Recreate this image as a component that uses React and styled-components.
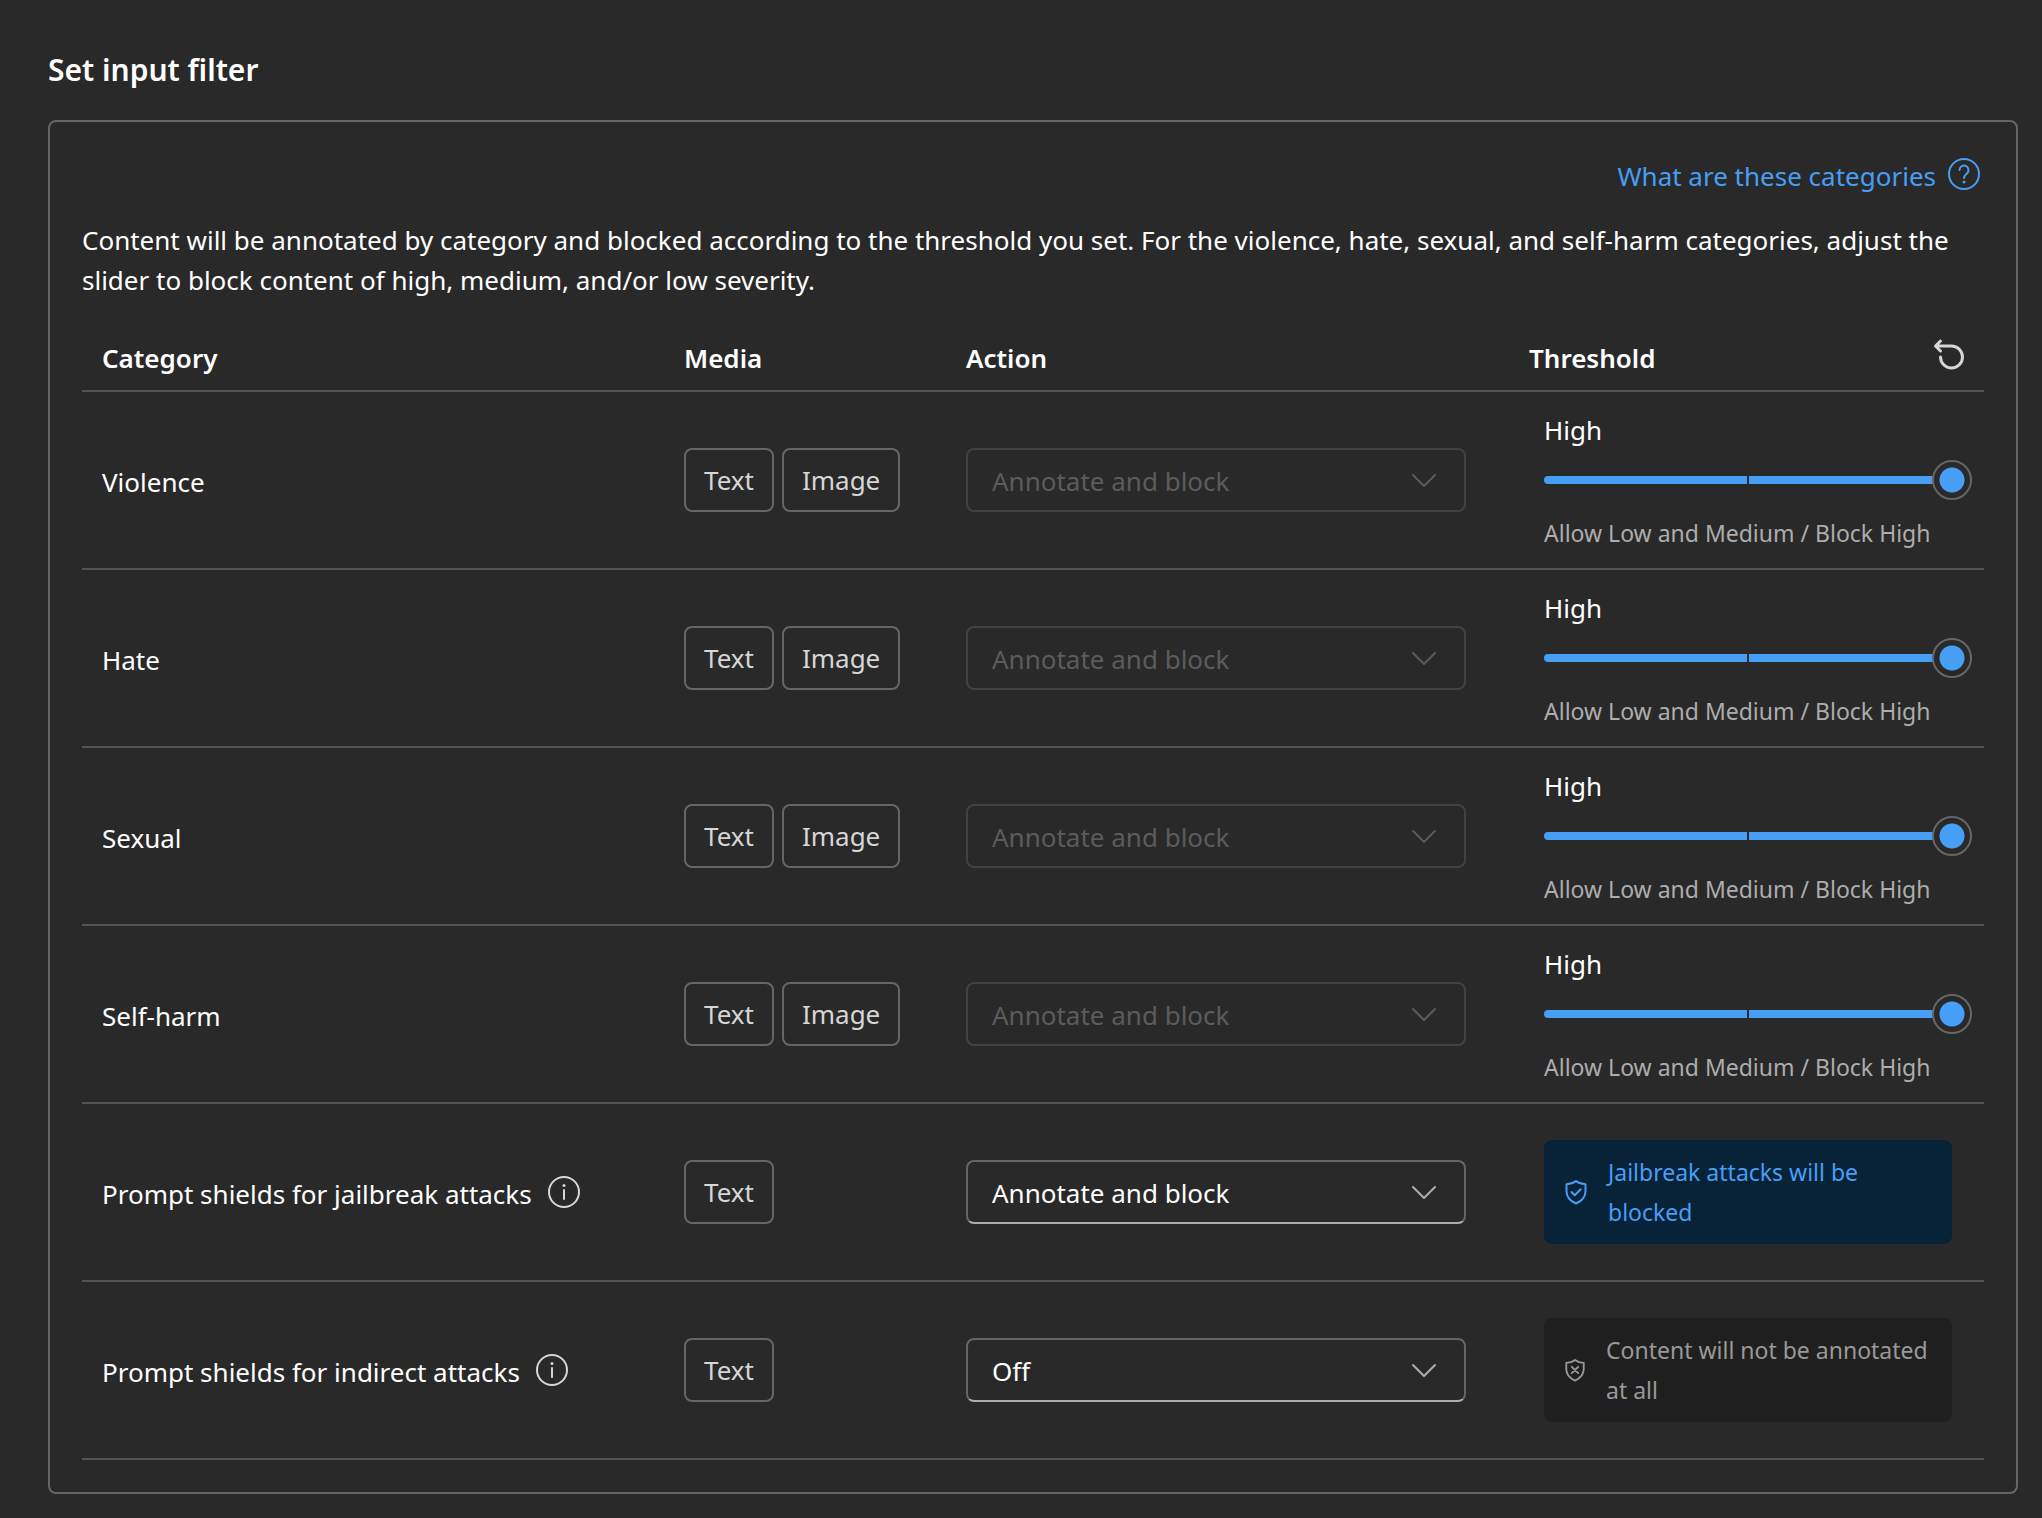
import { useState } from 'react';
import styled, { createGlobalStyle } from 'styled-components';

const GlobalStyle = createGlobalStyle`
	*, *::before, *::after {
		box-sizing: border-box;
	}

	body {
		margin: 0;
		background: #292929;
		color: #ffffff;
		font-family: 'Segoe UI', 'Noto Sans', sans-serif;
		font-size: 26px;
		line-height: 40px;
	}
`;

const Page = styled.main`
	padding: 48px 24px 24px 48px;
`;

const Title = styled.h1`
	margin: 0 0 28px;
	font-size: 30px;
	font-weight: 600;
	line-height: 44px;
`;

const Panel = styled.section`
	padding: 32px;
	border: 2px solid #666666;
	border-radius: 8px;
`;

const PanelTop = styled.div`
	display: flex;
	justify-content: flex-end;
	padding-right: 4px;
`;

const HelpLink = styled.a`
	display: flex;
	align-items: center;
	gap: 12px;
	height: 40px;
	color: #479ef5;
	text-decoration: none;
`;

const Intro = styled.p`
	margin: 26px 0 28px;
`;

const Table = styled.table`
	width: 100%;
	table-layout: fixed;
	border-collapse: separate;
	border-spacing: 0;
`;

const HeadCell = styled.th`
	width: ${({ $width }) => $width || 'auto'};
	height: 64px;
	padding: 0 20px 2px;
	border-bottom: 2px solid #525252;
	font-weight: 600;
	text-align: left;
`;

const HeadSplit = styled.div`
	display: flex;
	align-items: flex-start;
	justify-content: space-between;
`;

const Cell = styled.td`
	height: 178px;
	padding: 0 20px;
	border-bottom: 2px solid #525252;
`;

const ThresholdCell = styled(Cell)`
	padding: 0 32px 0 35px;
`;

const IconButton = styled.button`
	display: flex;
	padding: 0;
	border: 0;
	background: none;
	color: #d6d6d6;
	cursor: pointer;
`;

const Category = styled.div`
	display: flex;
	align-items: center;
	gap: 16px;
`;

/* the label sits a touch lower than the icon beside it */
const IconLabel = styled.span`
	padding-top: 3px;
`;

const Tags = styled.div`
	display: flex;
	gap: 8px;
`;

const Tag = styled.span`
	padding: 10px 18px;
	border: 2px solid #666666;
	border-radius: 8px;
	color: #d6d6d6;
`;

const SelectWrap = styled.div`
	position: relative;
	max-width: 500px;
	color: #adadad;

	svg {
		position: absolute;
		top: 16px;
		right: 26px;
		pointer-events: none;
	}
`;

const Select = styled.select`
	display: block;
	width: 100%;
	height: 64px;
	padding: 2px 72px 0 24px;
	border: 2px solid #666666;
	border-bottom-color: #adadad;
	border-radius: 8px;
	appearance: none;
	background: #292929;
	color: #ffffff;
	font: inherit;
	opacity: 1;

	&:disabled {
		border-color: #424242;
		color: #5c5c5c;
	}

	&:disabled + svg {
		color: #5c5c5c;
	}
`;

const SliderLabel = styled.label`
	display: block;
	padding-top: 3px;
`;

const Slider = styled.input`
	display: block;
	width: calc(100% + 20px);
	height: 40px;
	margin: 10px 0 13px;
	appearance: none;
	background: none;

	&::-webkit-slider-runnable-track {
		height: 8px;
		border-radius: 4px;
		background: linear-gradient(#292929, #292929) calc(50% - 10px) 0 / 2px 8px no-repeat, #479ef5;
	}

	&::-webkit-slider-thumb {
		width: 40px;
		height: 40px;
		margin-top: -16px;
		border: 2px solid #666666;
		border-radius: 50%;
		appearance: none;
		background: radial-gradient(circle, #479ef5 12px, #292929 13px);
	}
`;

const SliderHint = styled.div`
	color: #adadad;
	font-size: 23px;
`;

const Notice = styled.div`
	display: flex;
	align-items: center;
	gap: 20px;
	padding: 12px 20px;
	border-radius: 8px;
	background: ${({ $active }) => ($active ? '#082338' : '#1f1f1f')};
	color: ${({ $active }) => ($active ? '#479ef5' : '#999999')};
	font-size: 23px;

	svg {
		flex: none;
	}
`;

const HelpIcon = () => (
	<svg width='32' height='32' viewBox='0 0 32 32' fill='none' stroke='currentColor' strokeWidth='2' strokeLinecap='round'>
		<circle cx='16' cy='16' r='15' />
		<path d='M11.5 12a4.500 4.500 0 1 1 7.700 3.200C17.400 17 16 17.800 16 20' />
		<circle cx='16' cy='24' r='1.500' fill='currentColor' stroke='none' />
	</svg>
);

const InfoIcon = () => (
	<svg width='32' height='32' viewBox='0 0 32 32' fill='none' stroke='currentColor' strokeWidth='2' strokeLinecap='round'>
		<circle cx='16' cy='16' r='15' />
		<path d='M16 14v9' />
		<circle cx='16' cy='9.500' r='1.500' fill='currentColor' stroke='none' />
	</svg>
);

const ResetIcon = () => (
	<svg width='32' height='32' viewBox='0 0 32 32' fill='none' stroke='currentColor' strokeWidth='3' strokeLinecap='round' strokeLinejoin='round'>
		<path d='M8.500 3L3.500 8l5 5M3.500 8H19.500a11 11 0 1 1-11 11' />
	</svg>
);

const ChevronIcon = () => (
	<svg width='32' height='32' viewBox='0 0 32 32' fill='none' stroke='currentColor' strokeWidth='2' strokeLinecap='round' strokeLinejoin='round'>
		<path d='M5 11l11 11 11-11' />
	</svg>
);

const ShieldIcon = ({ active }) => (
	<svg width={active ? 24 : 22} height={active ? 28 : 26} viewBox='0 0 24 28' fill='none' stroke='currentColor' strokeWidth='2' strokeLinecap='round' strokeLinejoin='round'>
		<path d='M12 3c2.500 2 5.500 3 9.500 3.200V13c0 6-3.500 10-9.500 12.500C6 23 2.500 19 2.500 13V6.200C6.500 6 9.500 5 12 3z' />
		{active ? <path d='M7.500 14l3.200 3.200 6-6' /> : <path d='M8.500 10.500l7 7m0-7l-7 7' />}
	</svg>
);

const levels = ['Low', 'Medium', 'High'];

const hints = [
	'Block Low, Medium and High',
	'Allow Low / Block Medium and High',
	'Allow Low and Medium / Block High',
];

const harms = ['Violence', 'Hate', 'Sexual', 'Self-harm'];

const shields = [
	{
		name: 'Prompt shields for jailbreak attacks',
		action: 'Annotate and block',
		active: true,
		notice: 'Jailbreak attacks will be blocked',
	},
	{
		name: 'Prompt shields for indirect attacks',
		action: 'Off',
		active: false,
		notice: 'Content will not be annotated at all',
	},
];

const ActionSelect = ({ name, value, disabled }) => (
	<SelectWrap>
		<Select aria-label={`Action for ${name}`} defaultValue={value} disabled={disabled}>
			<option>Annotate and block</option>
			<option>Annotate only</option>
			<option>Off</option>
		</Select>
		<ChevronIcon />
	</SelectWrap>
);

const HarmRow = ({ name }) => {
	const [level, setLevel] = useState(2);
	const id = `threshold-${name}`;

	return (
		<tr>
			<Cell>
				<Category>
					<IconLabel>{name}</IconLabel>
				</Category>
			</Cell>
			<Cell>
				<Tags>
					<Tag>Text</Tag>
					<Tag>Image</Tag>
				</Tags>
			</Cell>
			<Cell>
				<ActionSelect name={name} value='Annotate and block' disabled />
			</Cell>
			<ThresholdCell>
				<SliderLabel htmlFor={id}>{levels[level]}</SliderLabel>
				<Slider
					id={id}
					type='range'
					min='0'
					max='2'
					value={level}
					onChange={(e) => setLevel(Number(e.target.value))}
				/>
				<SliderHint>{hints[level]}</SliderHint>
			</ThresholdCell>
		</tr>
	);
};

const ShieldRow = ({ name, action, active, notice }) => (
	<tr>
		<Cell>
			<Category>
				<IconLabel>{name}</IconLabel>
				<IconButton type='button' aria-label={`About ${name}`}>
					<InfoIcon />
				</IconButton>
			</Category>
		</Cell>
		<Cell>
			<Tags>
				<Tag>Text</Tag>
			</Tags>
		</Cell>
		<Cell>
			<ActionSelect name={name} value={action} />
		</Cell>
		<ThresholdCell>
			<Notice $active={active}>
				<ShieldIcon active={active} />
				{notice}
			</Notice>
		</ThresholdCell>
	</tr>
);

const App = () => {
	return (
		<>
			<GlobalStyle />
			<Page>
				<Title>Set input filter</Title>
				<Panel>
					<PanelTop>
						<HelpLink href='#categories'>
							<IconLabel>What are these categories</IconLabel>
							<HelpIcon />
						</HelpLink>
					</PanelTop>
					<Intro>
						Content will be annotated by category and blocked
						according to the threshold you set. For the violence,
						hate, sexual, and self-harm categories, adjust the
						slider to block content of high, medium, and/or low
						severity.
					</Intro>
					<Table>
						<thead>
							<tr>
								<HeadCell>Category</HeadCell>
								<HeadCell $width='282px'>Media</HeadCell>
								<HeadCell $width='563px'>Action</HeadCell>
								<HeadCell $width='475px'>
									<HeadSplit>
										Threshold
										<IconButton type='button' aria-label='Reset thresholds'>
											<ResetIcon />
										</IconButton>
									</HeadSplit>
								</HeadCell>
							</tr>
						</thead>
						<tbody>
							{harms.map((name) => (
								<HarmRow key={name} name={name} />
							))}
							{shields.map((shield) => (
								<ShieldRow key={shield.name} {...shield} />
							))}
						</tbody>
					</Table>
				</Panel>
			</Page>
		</>
	);
};

export default App;
